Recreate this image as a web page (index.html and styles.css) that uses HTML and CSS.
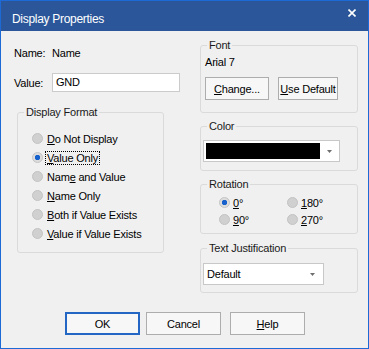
FILE: index.html
```html
<!DOCTYPE html>
<html lang="en">
  <head>
    <meta charset="UTF-8" />
    <title>Display Properties</title>
    <link rel="stylesheet" href="styles.css">
  </head>
  <body>
    <div class="dialog">
      <div class="titlebar">
        <span class="title">Display Properties</span>
        <svg class="close" width="8" height="8" viewBox="0 0 8 8">
          <path d="M0.5 0.5 L7.5 7.5 M7.5 0.5 L0.5 7.5" stroke="#fff" stroke-width="1.6" />
        </svg>
      </div>

      <div class="content">
        <div class="left-col">
          <div class="name-row">
            <span class="lbl">Name:</span>
            <span>Name</span>
          </div>
          <div class="value-row">
            <span class="lbl">Value:</span>
            <div class="textbox">GND</div>
          </div>

          <fieldset class="grp format-grp">
            <legend>Display Format</legend>
            <div class="opts">
              <div class="opt"><span class="dot"></span><span><u>D</u>o Not Display</span></div>
              <div class="opt"><span class="dot on"></span><span class="focus"><u>V</u>alue Only</span></div>
              <div class="opt"><span class="dot"></span><span>Nam<u>e</u> and Value</span></div>
              <div class="opt"><span class="dot"></span><span><u>N</u>ame Only</span></div>
              <div class="opt"><span class="dot"></span><span><u>B</u>oth if Value Exists</span></div>
              <div class="opt"><span class="dot"></span><span><u>V</u>alue if Value Exists</span></div>
            </div>
          </fieldset>
        </div>

        <div class="right-col">
          <fieldset class="grp font-grp">
            <legend>Font</legend>
            <div class="font-body">
              <div class="font-name">Arial 7</div>
              <div class="font-btns">
                <div class="btn btn-change"><u>C</u>hange...</div>
                <div class="btn btn-default"><u>U</u>se Default</div>
              </div>
            </div>
          </fieldset>

          <fieldset class="grp color-grp">
            <legend>Color</legend>
            <div class="combo color-combo">
              <span class="swatch"></span>
              <svg class="arrow" width="5" height="3" viewBox="0 0 5 3"><path d="M0 0 H5 L2.5 3 Z" fill="#6e6e6e" /></svg>
            </div>
          </fieldset>

          <fieldset class="grp rot-grp">
            <legend>Rotation</legend>
            <div class="rot-body">
              <div class="opt"><span class="dot on"></span><span><u>0</u>°</span></div>
              <div class="opt"><span class="dot"></span><span><u>1</u>80°</span></div>
              <div class="opt"><span class="dot"></span><span><u>9</u>0°</span></div>
              <div class="opt"><span class="dot"></span><span><u>2</u>70°</span></div>
            </div>
          </fieldset>

          <fieldset class="grp just-grp">
            <legend>Text Justification</legend>
            <div class="combo just-combo">
              <span class="combo-text">Default</span>
              <svg class="arrow" width="5" height="3" viewBox="0 0 5 3"><path d="M0 0 H5 L2.5 3 Z" fill="#6e6e6e" /></svg>
            </div>
          </fieldset>
        </div>
      </div>

      <div class="buttons">
        <div class="btn btn-ok">OK</div>
        <div class="btn btn-cancel">Cancel</div>
        <div class="btn btn-help"><u>H</u>elp</div>
      </div>
    </div>
  </body>
</html>
```

FILE: styles.css
```css
body {
  margin: 0;
  font-family: "Liberation Sans", Arial, sans-serif;
  font-size: 11px;
  letter-spacing: -0.2px;
  color: #000;
}

u {
  text-decoration-thickness: 1px;
  text-underline-offset: 1px;
}

.dialog {
  width: 369px;
  height: 349px;
  box-sizing: border-box;
  border: 1px solid #1d6ad6;
  background: #f0f0f0;
  display: flex;
  flex-direction: column;
}

/* title bar */
.titlebar {
  height: 30px;
  flex-shrink: 0;
  background: #2b579a;
  color: #fff;
  display: flex;
  justify-content: space-between;
  align-items: flex-start;
  padding-left: 11px;
}

.title {
  font-size: 12px;
  letter-spacing: -0.3px;
  line-height: 15px;
  margin-top: 11px;
}

.close {
  margin: 8px 12px 0 0;
}

/* main area */
.content {
  display: flex;
  padding-left: 13px;
}

.left-col {
  width: 170px;
  padding-top: 16px;
}

.right-col {
  width: 158px;
  margin-left: 16px;
  padding-top: 8px;
}

.name-row {
  display: flex;
  line-height: 13px;
}

.lbl {
  width: 38px;
}

.value-row {
  display: flex;
  align-items: center;
  margin-top: 13px;
}

.textbox {
  width: 128px;
  height: 19px;
  box-sizing: border-box;
  border: 1px solid #cbcbcb;
  background: #fff;
  padding-left: 3px;
  line-height: 17px;
}

/* group boxes */
.grp {
  margin: 0;
  padding: 0;
  min-width: 0;
  border: 1px solid #dadada;
  border-radius: 3px;
  box-sizing: border-box;
}

.grp legend {
  margin-left: 6px;
  padding: 0 2px;
  line-height: 13px;
  color: #1a1a1a;
}

.format-grp {
  margin: 14px 0 0 3px;
  width: 147px;
}

.opts {
  padding: 10px 0 9px 14px;
}

.opt {
  display: flex;
  align-items: center;
  gap: 4px;
  height: 19px;
}

.dot {
  width: 11px;
  height: 11px;
  box-sizing: border-box;
  border-radius: 50%;
  border: 1px solid #c3c3c3;
  background: #d0d0d0;
}

.dot.on {
  background: radial-gradient(circle, #1761cd 0 2.4px, #dcdcdc 3px);
}

.focus {
  outline: 1px dotted #000;
  outline-offset: 0;
  line-height: 12px;
  padding: 0 1px;
  margin-left: -1px;
}

.font-body {
  padding: 4px 0 12px 4px;
}

.font-name {
  line-height: 13px;
}

.font-btns {
  display: flex;
  gap: 9px;
  margin-top: 8px;
}

.btn {
  height: 23px;
  box-sizing: border-box;
  border: 1px solid #adadad;
  background: #f7f7f7;
  display: flex;
  align-items: center;
  justify-content: center;
}

.btn-change {
  width: 64px;
}

.btn-default {
  width: 60px;
}

.color-grp {
  margin-top: 7px;
}

.combo {
  height: 22px;
  box-sizing: border-box;
  border: 1px solid #c8c8c8;
  background: #fff;
  display: flex;
  align-items: center;
}

.color-combo {
  width: 137px;
  margin: 7px 0 8px 2px;
}

.swatch {
  width: 114px;
  height: 16px;
  margin-left: 2px;
  background: #000;
}

.color-combo .arrow {
  margin-left: 7px;
}

.rot-grp {
  margin-top: 7px;
}

.rot-body {
  display: grid;
  grid-template-columns: 68px auto;
  grid-auto-rows: 17px;
  padding: 3px 0 5px 18px;
}

.rot-body .opt {
  height: 17px;
  gap: 3px;
}

.just-grp {
  margin-top: 8px;
}

.just-combo {
  width: 121px;
  margin: 8px 0 7px 2px;
  padding-left: 3px;
}

.just-combo .arrow {
  margin-left: auto;
  margin-right: 8px;
}

/* dialog buttons */
.buttons {
  margin-top: auto;
  display: flex;
  padding: 0 0 13px 64px;
}

.buttons .btn {
  width: 75px;
}

.btn-ok {
  border: 2px solid #2466c4;
}

.btn-cancel {
  margin-left: 6px;
}

.btn-help {
  margin-left: 9px;
}
```
